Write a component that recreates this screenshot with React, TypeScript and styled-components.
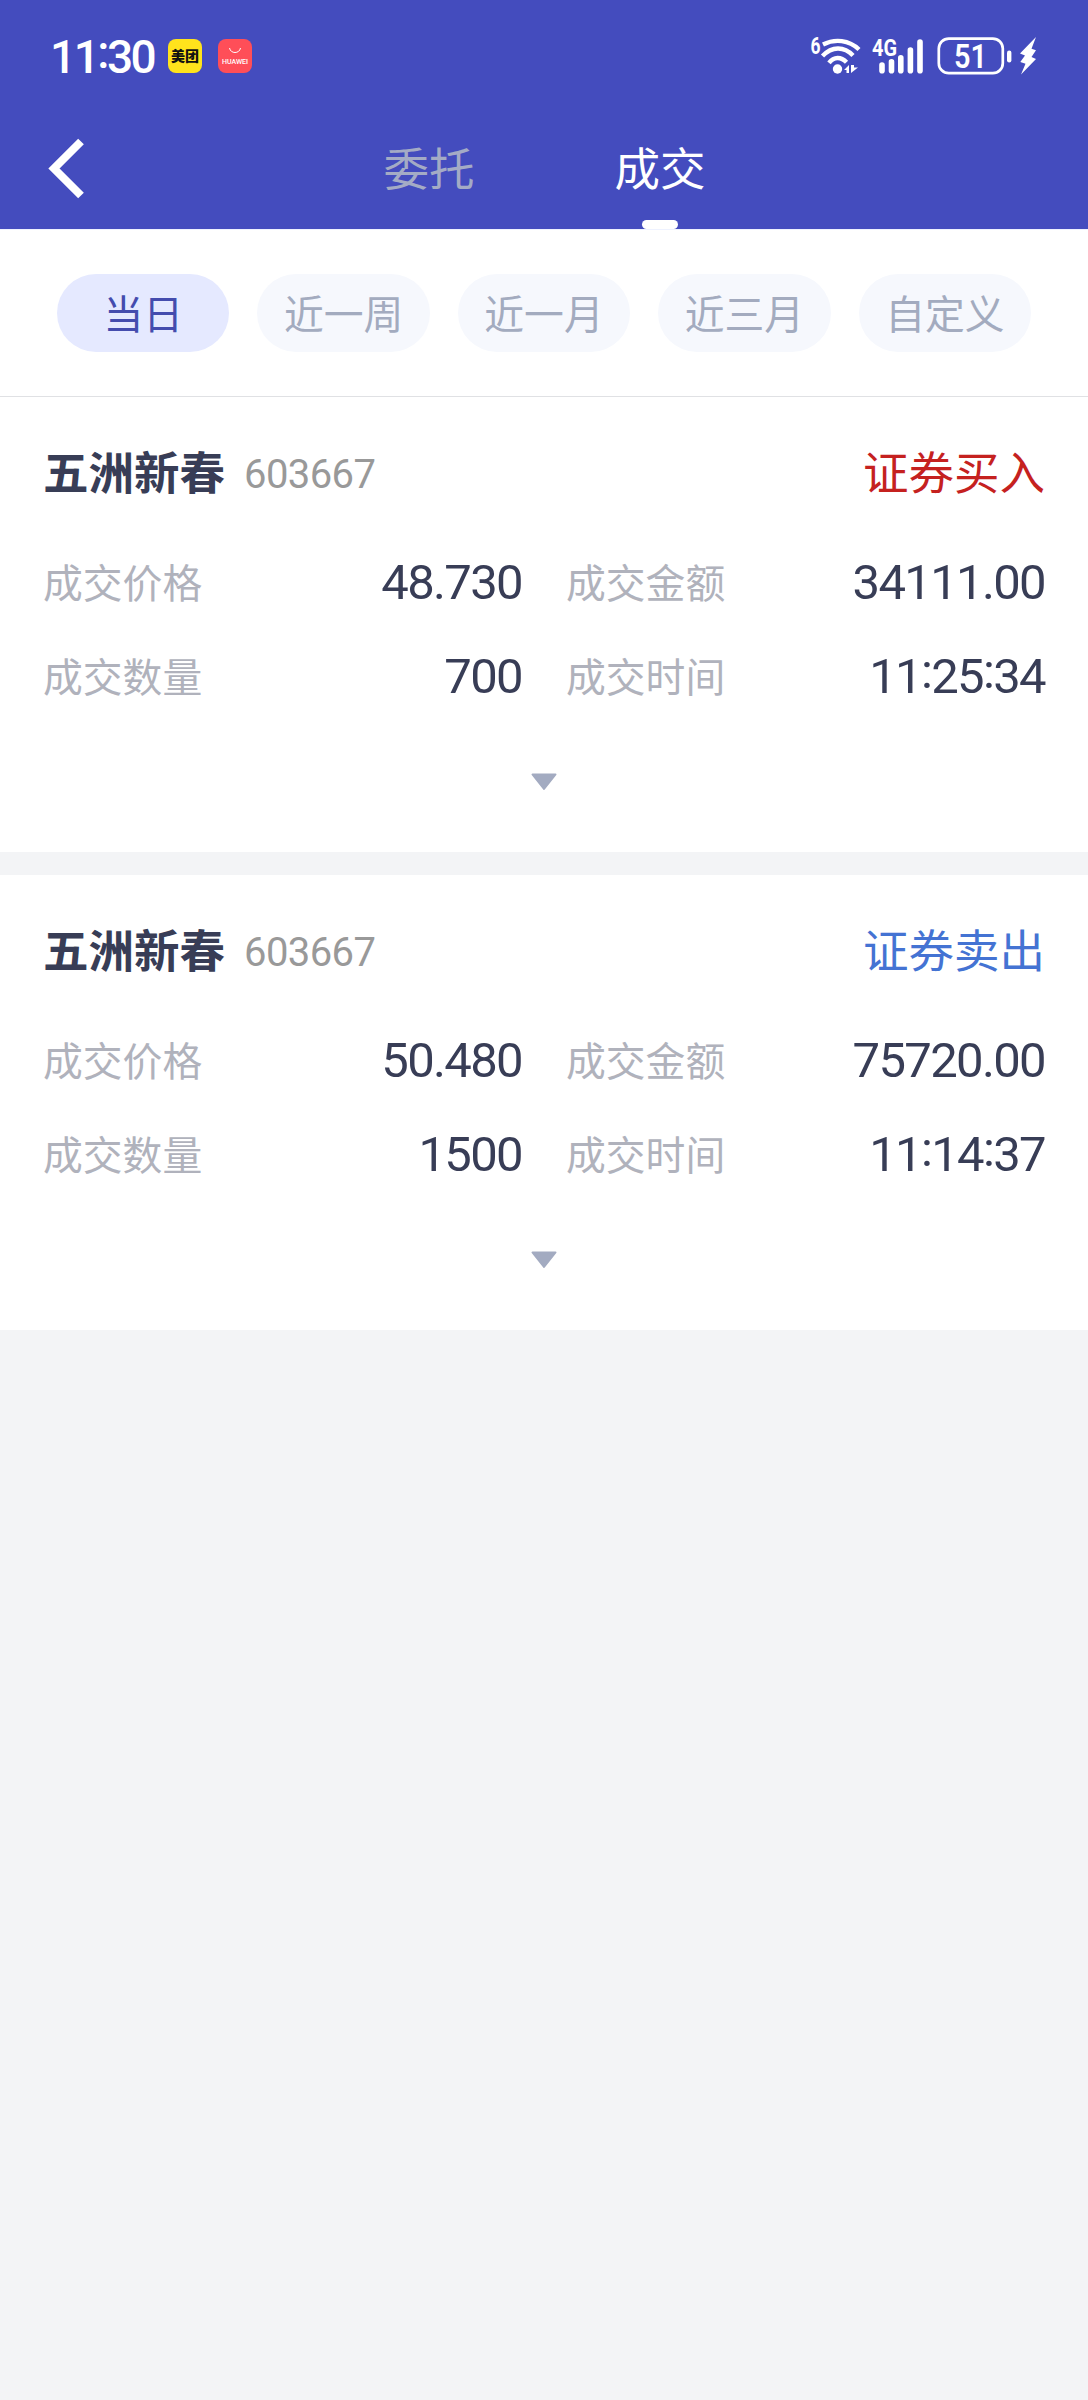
import React from "react";
import styled, { createGlobalStyle } from "styled-components";

const Global = createGlobalStyle`
  * { box-sizing: border-box; }
  body { margin: 0; background: #f3f4f6; }
`;

const cjk = `"Noto Sans CJK SC", sans-serif`;
const latin = `Roboto, "Noto Sans CJK SC", sans-serif`;

const Page = styled.div`
  width: 1088px;
  min-height: 2400px;
  background: #f3f4f6;
  font-family: ${cjk};
  color: #383d56;
`;

const Header = styled.header`
  height: 229px;
  background: #444cbe;
  color: #fff;
`;

const StatusBar = styled.div`
  height: 112px;
  padding: 0 50px 0 50px;
  display: flex;
  justify-content: space-between;
  align-items: center;
`;

const StatusLeft = styled.div`
  display: flex;
  align-items: center;
`;

const Clock = styled.span`
  width: 118px;
  padding-top: 2px;
  font: 500 46px/56px ${latin};
  letter-spacing: -2.5px;
`;

const AppBadge = styled.span<{ $bg: string; $fg: string }>`
  width: 34px;
  height: 34px;
  margin-right: 16px;
  border-radius: 8px;
  background: ${(p) => p.$bg};
  color: ${(p) => p.$fg};
  display: flex;
  flex-direction: column;
  align-items: center;
  justify-content: center;
`;

const MeituanText = styled.span`
  font: 900 14px/16px ${cjk};
  margin-top: -2px;
`;

const HuaweiText = styled.span`
  margin-top: 3px;
  font: 500 7px/8px ${latin};
`;

const NavBar = styled.nav`
  height: 117px;
  padding-left: 47px;
  display: flex;
`;

const Back = styled.div`
  width: 306px;
  padding-top: 25px;
`;

const Tab = styled.div<{ $active?: boolean }>`
  width: 152px;
  margin-right: 79px;
  display: flex;
  flex-direction: column;
  align-items: center;
  justify-content: space-between;
  font-size: 45.5px;
  line-height: 109px;
  color: ${(p) => (p.$active ? "#fff" : "#a4abc5")};
`;

const TabLabel = styled.span`
  height: 108px;
`;

const Indicator = styled.span`
  width: 36px;
  height: 9px;
  border-radius: 4.5px;
  background: #fff;
`;

const Filters = styled.div`
  height: 168px;
  padding: 44px 57px 0;
  display: flex;
  gap: 28px;
  background: #fff;
  border-top: 1px solid #eef2ff;
  border-bottom: 1px solid #e0e1e4;
`;

const Pill = styled.div<{ $active?: boolean }>`
  flex: 1;
  height: 78px;
  border-radius: 39px;
  font-size: 39.8px;
  line-height: 76px;
  text-align: center;
  background: ${(p) => (p.$active ? "#e5e9ff" : "#f6f8fd")};
  color: ${(p) => (p.$active ? "#444cae" : "#a3abbf")};
`;

const Card = styled.article`
  height: 455px;
  margin-bottom: 23px;
  padding: 38px 43px 0;
  background: #fff;
`;

const CardHead = styled.div`
  height: 70px;
  display: flex;
  align-items: center;
  line-height: 70px;
`;

const StockName = styled.span`
  font-size: 45.5px;
  font-weight: 700;
`;

const StockCode = styled.span`
  margin: 10px auto 0 19px;
  font-family: ${latin};
  font-size: 40px;
  letter-spacing: -0.6px;
  color: #999;
`;

const Side = styled.span<{ $color: string }>`
  font-size: 45.5px;
  color: ${(p) => p.$color};
`;

const Fields = styled.div`
  margin-top: 29px;
  display: grid;
  grid-template-columns: 1fr 1fr;
  column-gap: 44px;
  grid-auto-rows: 94px;
`;

const Field = styled.div`
  display: flex;
  justify-content: space-between;
  align-items: center;
`;

const Label = styled.span`
  font-size: 39.8px;
  line-height: 60px;
  color: #b0b2bc;
`;

const Value = styled.span`
  padding-top: 3px;
  font-family: ${latin};
  font-size: 49px;
  line-height: 60px;
  letter-spacing: -1.65px;
`;

const Colon = styled.span`
  position: relative;
  top: -5px;
`;

const Expand = styled.div`
  margin-top: 51px;
  display: flex;
  justify-content: center;
`;

const StatusIcons = () => (
  <svg width="230" height="44" viewBox="808 34 230 44" fill="none" fontFamily="Roboto, sans-serif">
    <text x="810.5" y="54" fontSize="23" fontWeight="700" fill="#fff" textLength="10" lengthAdjust="spacingAndGlyphs">6</text>
    <g stroke="#fff" strokeWidth="4.4">
      <path d="M823 44.5C835 38.5 849 40 859 49.5" />
      <path d="M822.5 56C832 46 844 46 853 55.5" />
      <path d="M829 62.8C834 56.5 841 56.5 846.5 62.3" />
    </g>
    <circle cx="837.5" cy="69" r="4.7" fill="#fff" />
    <path d="M844 70L849 65V73H846.5V70ZM851 65V73L858 67.5H854V65Z" fill="#fff" />
    <text x="872" y="55.5" fontSize="23" fontWeight="700" fill="#fff" textLength="25" lengthAdjust="spacingAndGlyphs">4G</text>
    <path d="M882 65V70.7M891.5 61.8V70.7M900.8 57.8V70.7M910.4 50V70.7M920 42V70.7" stroke="#fff" strokeWidth="5.6" strokeLinecap="round" />
    <rect x="938.8" y="38.6" width="64" height="34.6" rx="10" stroke="#fff" strokeWidth="2.7" />
    <text x="954" y="68" fontSize="32.5" fontWeight="600" fill="#fff" textLength="33" lengthAdjust="spacingAndGlyphs">51</text>
    <rect x="1007" y="50.5" width="4.4" height="12" rx="2.2" fill="#fff" />
    <path d="M1036 37L1020 53.5L1025 55.5L1020.3 62L1025.5 63.8L1021 74.5L1036 59L1031.5 57L1036 50.3L1031.5 48.8Z" fill="#fff" />
  </svg>
);

type Trade = {
  name: string;
  code: string;
  side: string;
  color: string;
  fields: [string, string][];
};

const trades: Trade[] = [
  {
    name: "五洲新春",
    code: "603667",
    side: "证券买入",
    color: "#c5211f",
    fields: [
      ["成交价格", "48.730"],
      ["成交金额", "34111.00"],
      ["成交数量", "700"],
      ["成交时间", "11:25:34"],
    ],
  },
  {
    name: "五洲新春",
    code: "603667",
    side: "证券卖出",
    color: "#4473d3",
    fields: [
      ["成交价格", "50.480"],
      ["成交金额", "75720.00"],
      ["成交数量", "1500"],
      ["成交时间", "11:14:37"],
    ],
  },
];

const ranges = ["当日", "近一周", "近一月", "近三月", "自定义"];

const withColons = (text: string) =>
  text.split(":").map((part, i) => (
    <React.Fragment key={i}>
      {i > 0 && <Colon>:</Colon>}
      {part}
    </React.Fragment>
  ));

const TradeCard = ({ trade }: { trade: Trade }) => (
  <Card>
    <CardHead>
      <StockName>{trade.name}</StockName>
      <StockCode>{trade.code}</StockCode>
      <Side $color={trade.color}>{trade.side}</Side>
    </CardHead>
    <Fields>
      {trade.fields.map(([label, value]) => (
        <Field key={label}>
          <Label>{label}</Label>
          <Value>{withColons(value)}</Value>
        </Field>
      ))}
    </Fields>
    <Expand>
      <svg width="26" height="18" viewBox="0 0 26 18">
        <path d="M1.5 1.5H24.5L13 16Z" fill="#a3abc1" stroke="#a3abc1" strokeWidth="2" strokeLinejoin="round" />
      </svg>
    </Expand>
  </Card>
);

export default function App() {
  return (
    <Page>
      <Global />
      <Header>
        <StatusBar>
          <StatusLeft>
            <Clock>{withColons("11:30")}</Clock>
            <AppBadge $bg="#ffe31c" $fg="#111">
              <MeituanText>美团</MeituanText>
            </AppBadge>
            <AppBadge $bg="#ff4e58" $fg="#fff">
              <svg width="14" height="8" viewBox="0 0 14 8">
                <path d="M1.5 1C2.5 7 11.5 7 12.5 1" fill="none" stroke="#fff" strokeWidth="1" />
              </svg>
              <HuaweiText>HUAWEI</HuaweiText>
            </AppBadge>
          </StatusLeft>
          <StatusIcons />
        </StatusBar>
        <NavBar>
          <Back>
            <svg width="40" height="64" viewBox="0 0 40 64">
              <path d="M34 4.5L7 31.5L34 58.5" fill="none" stroke="#fff" strokeWidth="8" />
            </svg>
          </Back>
          <Tab>
            <TabLabel>委托</TabLabel>
          </Tab>
          <Tab $active>
            <TabLabel>成交</TabLabel>
            <Indicator />
          </Tab>
        </NavBar>
      </Header>
      <Filters>
        {ranges.map((r, i) => (
          <Pill key={r} $active={i === 0}>
            {r}
          </Pill>
        ))}
      </Filters>
      {trades.map((t) => (
        <TradeCard key={t.side} trade={t} />
      ))}
    </Page>
  );
}
